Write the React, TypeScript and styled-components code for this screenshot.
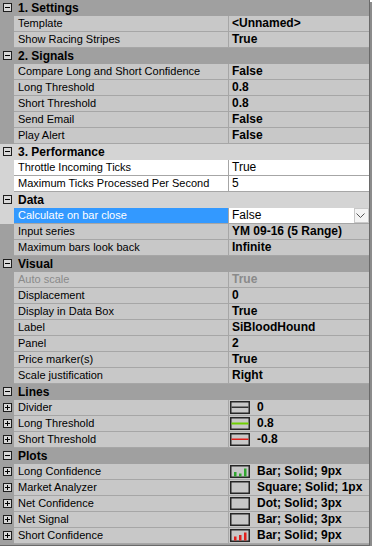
import styled, {createGlobalStyle} from "styled-components";

const GlobalStyle = createGlobalStyle`
    html, body {
        margin: 0;
        padding: 0;
        background: #ffffff;
    }
    body {
        font-family: "Liberation Sans", Arial, sans-serif;
    }
`

type IconKind = "divider" | "green" | "red" | "greenBars" | "redBars" | "empty";
type Tone = "normal" | "white" | "selected";

type Item = {
    name: string;
    value: string;
    tone?: Tone;
    lightMargin?: boolean;
    disabled?: boolean;
    expandable?: boolean;
    icon?: IconKind;
};

type Section = {
    title: string;
    light?: boolean;
    items: Item[];
};

const sections: Section[] = [
    {
        title: "1. Settings",
        items: [
            {name: "Template", value: "<Unnamed>"},
            {name: "Show Racing Stripes", value: "True"},
        ],
    },
    {
        title: "2. Signals",
        items: [
            {name: "Compare Long and Short Confidence", value: "False"},
            {name: "Long Threshold", value: "0.8"},
            {name: "Short Threshold", value: "0.8"},
            {name: "Send Email", value: "False"},
            {name: "Play Alert", value: "False"},
        ],
    },
    {
        title: "3. Performance",
        light: true,
        items: [
            {name: "Throttle Incoming Ticks", value: "True", tone: "white", lightMargin: true},
            {name: "Maximum Ticks Processed Per Second", value: "5", tone: "white", lightMargin: true},
        ],
    },
    {
        title: "Data",
        light: true,
        items: [
            {name: "Calculate on bar close", value: "False", tone: "selected", lightMargin: true},
            {name: "Input series", value: "YM 09-16 (5 Range)"},
            {name: "Maximum bars look back", value: "Infinite"},
        ],
    },
    {
        title: "Visual",
        items: [
            {name: "Auto scale", value: "True", disabled: true},
            {name: "Displacement", value: "0"},
            {name: "Display in Data Box", value: "True"},
            {name: "Label", value: "SiBloodHound"},
            {name: "Panel", value: "2"},
            {name: "Price marker(s)", value: "True"},
            {name: "Scale justification", value: "Right"},
        ],
    },
    {
        title: "Lines",
        items: [
            {name: "Divider", value: "0", expandable: true, icon: "divider"},
            {name: "Long Threshold", value: "0.8", expandable: true, icon: "green"},
            {name: "Short Threshold", value: "-0.8", expandable: true, icon: "red"},
        ],
    },
    {
        title: "Plots",
        items: [
            {name: "Long Confidence", value: "Bar; Solid; 9px", expandable: true, icon: "greenBars"},
            {name: "Market Analyzer", value: "Square; Solid; 1px", expandable: true, icon: "empty"},
            {name: "Net Confidence", value: "Dot; Solid; 3px", expandable: true, icon: "empty"},
            {name: "Net Signal", value: "Bar; Solid; 3px", expandable: true, icon: "empty"},
            {name: "Short Confidence", value: "Bar; Solid; 9px", expandable: true, icon: "redBars"},
        ],
    },
];

// small pen/plot preview shown before the value
const Swatch = ({kind}: {kind: IconKind}) => (
    <svg width="20" height="13" viewBox="0 0 20 13">
        <rect x="0.75" y="0.75" width="18.5" height="11.5" fill="none" stroke="#262626" strokeWidth="1.5"/>
        {kind === "divider" && <rect x="1.5" y="5.5" width="17" height="1.5" fill="#333333"/>}
        {kind === "green" && <rect x="1.5" y="5.5" width="17" height="2" fill="#6fd000"/>}
        {kind === "red" && <rect x="1.5" y="5.5" width="17" height="1.5" fill="#e0201c"/>}
        {kind === "greenBars" && (
            <g fill="#2fa52f">
                <rect x="4" y="7" width="2.5" height="4.5"/>
                <rect x="9" y="8.5" width="2.5" height="3"/>
                <rect x="14" y="3.5" width="2.5" height="8"/>
            </g>
        )}
        {kind === "redBars" && (
            <g fill="#e0201c">
                <rect x="4" y="7.5" width="2.5" height="4"/>
                <rect x="9" y="6" width="2.5" height="5.5"/>
                <rect x="14" y="3.5" width="2.5" height="8"/>
            </g>
        )}
    </svg>
);

export default function App() {
    return (
        <>
            <GlobalStyle/>
            <Grid>
                {sections.map((section) => (
                    <div key={section.title}>
                        <Category $light={section.light}>
                            <Margin $light={section.light}>
                                <Toggle $open/>
                            </Margin>
                            <CategoryTitle>{section.title}</CategoryTitle>
                        </Category>
                        {section.items.map((item) => (
                            <Row key={item.name}>
                                <Margin $light={item.lightMargin}>
                                    {item.expandable && <Toggle/>}
                                </Margin>
                                <NameCell $tone={item.tone ?? "normal"} $disabled={item.disabled}>
                                    {item.name}
                                </NameCell>
                                <ValueCell $tone={item.tone ?? "normal"} $disabled={item.disabled}>
                                    {item.icon && <Swatch kind={item.icon}/>}
                                    <ValueText $icon={!!item.icon}>{item.value}</ValueText>
                                    {item.tone === "selected" && (
                                        <DropButton>
                                            <svg width="9" height="5" viewBox="0 0 9 5">
                                                <path d="M0.5 0.5 L4.5 4.5 L8.5 0.5" fill="none" stroke="#555" strokeWidth="1"/>
                                            </svg>
                                        </DropButton>
                                    )}
                                </ValueCell>
                            </Row>
                        ))}
                    </div>
                ))}
            </Grid>
        </>
    );
}

const Grid = styled.div`
    width: 369px;
    height: 545px;
    background: #a0a0a0;
    border-right: 1px solid #6a6a6a;
    border-bottom: 1px solid #6a6a6a;
    box-shadow: 2px 2px 0 #8c8c8c;
    overflow: hidden;
    color: #111111;
`

const Category = styled.div<{ $light?: boolean }>`
    display: flex;
    height: 16px;
    background: ${(p) => (p.$light ? "#d4d4d4" : "#a0a0a0")};
`

const CategoryTitle = styled.span`
    font-weight: bold;
    font-size: 12px;
    line-height: 16px;
    padding-left: 4px;
    color: #000000;
`

const Row = styled.div`
    display: grid;
    grid-template-columns: 14px 215px 1fr;
    height: 15px;
    border-bottom: 1px solid #a6a6a6;
`

const Margin = styled.div<{ $light?: boolean }>`
    width: 14px;
    height: 16px;
    margin-bottom: -1px;
    display: flex;
    align-items: center;
    justify-content: center;
    background: ${(p) => (p.$light ? "#d4d4d4" : "#a0a0a0")};
`

const Toggle = styled.span<{ $open?: boolean }>`
    position: relative;
    width: 9px;
    height: 9px;
    box-sizing: border-box;
    border: 1px solid #1e1e1e;
    background: #d8d8d8;
    margin-top: -1px;

    &::before {
        content: "";
        position: absolute;
        left: 1px;
        top: 3px;
        width: 5px;
        height: 1px;
        background: #000;
    }

    &::after {
        content: "";
        display: ${(p) => (p.$open ? "none" : "block")};
        position: absolute;
        left: 3px;
        top: 1px;
        width: 1px;
        height: 5px;
        background: #000;
    }
`

const toneBg = (tone: Tone) =>
    tone === "selected" ? "#3399ff" : tone === "white" ? "#ffffff" : "#c8c8c8";

const NameCell = styled.div<{ $tone: Tone; $disabled?: boolean }>`
    background: ${(p) => toneBg(p.$tone)};
    color: ${(p) => (p.$disabled ? "#8a8a8a" : p.$tone === "selected" ? "#ffffff" : "#000000")};
    font-size: 11px;
    line-height: 15px;
    padding-left: 4px;
    white-space: nowrap;
    overflow: hidden;
    border-right: 1px solid #a6a6a6;
`

const ValueCell = styled.div<{ $tone: Tone; $disabled?: boolean }>`
    display: flex;
    align-items: center;
    background: ${(p) => (p.$tone === "normal" ? "#c8c8c8" : "#ffffff")};
    color: ${(p) => (p.$disabled ? "#8a8a8a" : "#000000")};
    font-weight: ${(p) => (p.$tone === "normal" ? "bold" : "normal")};
    font-size: 12px;
    line-height: 15px;
    padding-left: 3px;
    white-space: nowrap;
    overflow: hidden;

    svg:first-child {
        margin-left: -2px;
        flex: none;
    }
`

const ValueText = styled.span<{ $icon?: boolean }>`
    flex: 1;
    padding-left: ${(p) => (p.$icon ? "7px" : "0")};
`

const DropButton = styled.span`
    display: flex;
    align-items: center;
    justify-content: center;
    width: 15px;
    height: 15px;
    box-sizing: border-box;
    border: 1px solid #c8c8c8;
    background: #f4f4f4;
`
